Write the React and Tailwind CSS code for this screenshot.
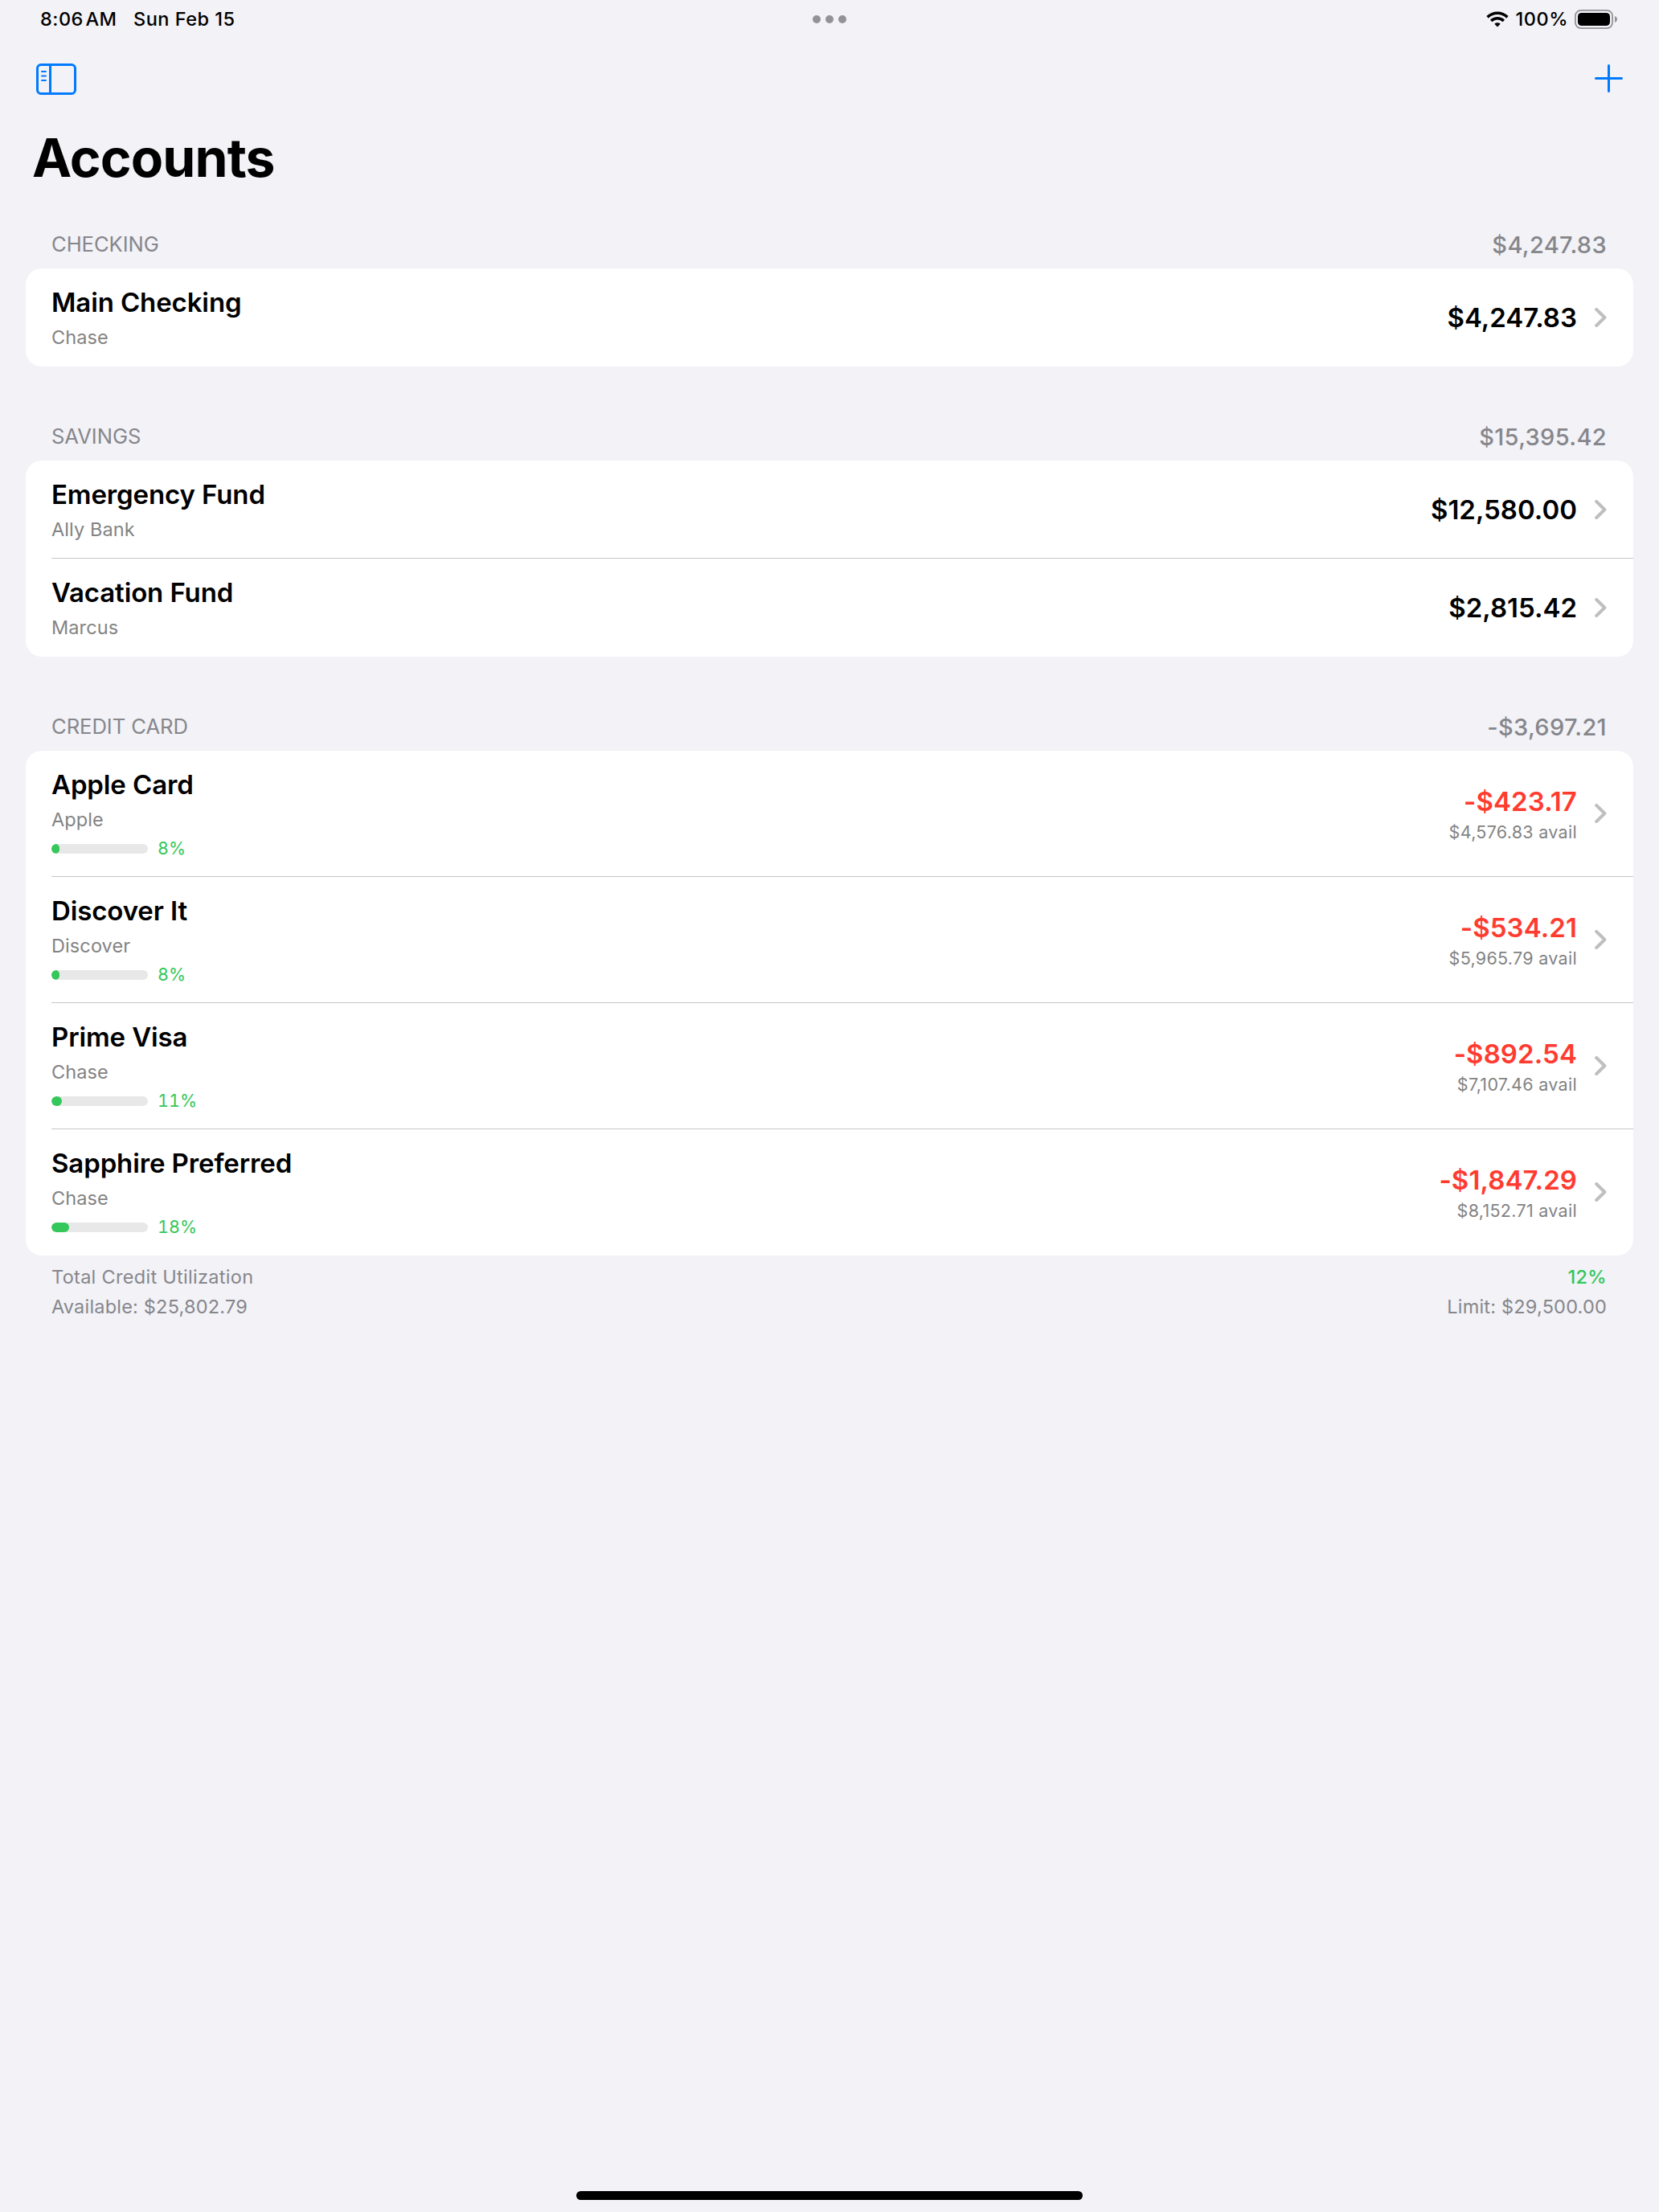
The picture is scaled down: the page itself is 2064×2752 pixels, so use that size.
import React from "react";

const sections = [
  {
    title: "CHECKING",
    total: "$4,247.83",
    accounts: [{ name: "Main Checking", bank: "Chase", balance: "$4,247.83" }],
  },
  {
    title: "SAVINGS",
    total: "$15,395.42",
    accounts: [
      { name: "Emergency Fund", bank: "Ally Bank", balance: "$12,580.00" },
      { name: "Vacation Fund", bank: "Marcus", balance: "$2,815.42" },
    ],
  },
  {
    title: "CREDIT CARD",
    total: "-$3,697.21",
    accounts: [
      { name: "Apple Card", bank: "Apple", balance: "-$423.17", avail: "$4,576.83 avail", used: 8.46 },
      { name: "Discover It", bank: "Discover", balance: "-$534.21", avail: "$5,965.79 avail", used: 8.22 },
      { name: "Prime Visa", bank: "Chase", balance: "-$892.54", avail: "$7,107.46 avail", used: 11.16 },
      { name: "Sapphire Preferred", bank: "Chase", balance: "-$1,847.29", avail: "$8,152.71 avail", used: 18.47 },
    ],
  },
];

// ── Icons ──────────────────────────────────────────────────
function SidebarIcon() {
  return (
    <svg width="50" height="39" viewBox="0 0 50 39" fill="none" stroke="#007aff" strokeLinecap="round">
      <rect x="1.5" y="1.5" width="47" height="36" rx="4.6" strokeWidth="3" />
      <path d="M17.5 1.5v36" strokeWidth="3" strokeLinecap="butt" />
      <path d="M7 10h5M7 15.5h5M7 21h5" strokeWidth="2" />
    </svg>
  );
}

function PlusIcon() {
  return (
    <svg className="mb-0.5" width="35" height="35" viewBox="0 0 35 35" fill="none" stroke="#007aff" strokeWidth="3" strokeLinecap="round">
      <path d="M17.5 1.5v32M1.5 17.5h32" />
    </svg>
  );
}

function WifiIcon() {
  return (
    <svg width="28" height="20" viewBox="0 0 28 20" fill="none" stroke="#000">
      <path d="M1.6 7.4a17.6 17.6 0 0 1 24.8 0" strokeWidth="3.6" />
      <path d="M6.2 12a11 11 0 0 1 15.6 0" strokeWidth="3.5" />
      <path d="M14 19.6l-3.7-3.8a5.4 5.4 0 0 1 7.4 0z" fill="#000" stroke="none" />
    </svg>
  );
}

function BatteryIcon() {
  return (
    <svg width="55" height="24" viewBox="0 0 55 24" fill="none">
      <rect x="0.9" y="0.9" width="46.2" height="22.2" rx="7" stroke="#929297" strokeWidth="1.8" />
      <rect x="4" y="4" width="40" height="16" rx="4.6" fill="#000" />
      <path d="M50 8c1.900.8 3 2.200 3 4s-1.100 3.200-3 4z" fill="#929297" />
    </svg>
  );
}

function Chevron({ className = "" }) {
  return (
    <svg className={`ml-[22px] shrink-0 ${className}`} width="15" height="24" viewBox="0 0 15 24" fill="none" stroke="#bfbfbf" strokeWidth="4" strokeLinecap="round" strokeLinejoin="round">
      <path d="M2.200 2L12.400 12L2.200 22" />
    </svg>
  );
}

// ── Header bars ────────────────────────────────────────────
function StatusBar() {
  return (
    <div className="grid h-[48px] grid-cols-3 items-center px-[50px] text-[23.5px] leading-8 font-medium tracking-[0.5px] text-black">
      <div className="flex gap-[20.5px]">
        <span>8:06&#8202;AM</span>
        <span>Sun Feb 15</span>
      </div>
      <div className="flex justify-center gap-1.5">
        <span className="size-2.5 rounded-full bg-[#929297]" />
        <span className="size-2.5 rounded-full bg-[#929297]" />
        <span className="size-2.5 rounded-full bg-[#929297]" />
      </div>
      <div className="flex items-center justify-end">
        <WifiIcon />
        <span className="mr-2 ml-[9px]">100%</span>
        <BatteryIcon />
      </div>
    </div>
  );
}

function NavBar() {
  return (
    <div className="flex h-[101px] items-center justify-between px-[45px]">
      <SidebarIcon />
      <PlusIcon />
    </div>
  );
}

// ── Account row ────────────────────────────────────────────
function Utilization({ used }) {
  return (
    <div className="mt-1.5 flex h-7 items-center">
      <div className="h-3 w-[120px] overflow-hidden rounded-full bg-[#e8e8e8]">
        <div className="h-3 rounded-full bg-[#34c759]" style={{ width: `${used}%` }} />
      </div>
      <span className="ml-3 pb-0.5 text-[21.5px] leading-7 tracking-[0.1px] text-[#34c759] tabular-nums">{Math.round(used)}%</span>
    </div>
  );
}

function AccountRow({ account, last }) {
  const { name, bank, balance, avail, used } = account;
  return (
    <div className={`relative flex justify-between pr-[33px] pl-8 ${avail ? "h-[157px]" : "h-[122px]"}`}>
      <div className="pt-[22px]">
        <div className="text-[33px] leading-10 font-semibold tracking-[-0.12px] text-black">{name}</div>
        <div className="mt-2 text-[23.5px] leading-8 tracking-[0.1px] text-[#838383]">{bank}</div>
        {used && <Utilization used={used} />}
      </div>
      <div className="flex items-center">
        <div className="text-right">
          <div className={`text-[33px] leading-10 font-semibold ${avail ? "tracking-[0.1px] text-[#ff3b30]" : "text-black"}`}>{balance}</div>
          {avail && <div className="mt-1 text-[21.5px] leading-7 tracking-[0.3px] text-[#838383]">{avail}</div>}
        </div>
        <Chevron className={avail ? "mb-px" : ""} />
      </div>
      {!last && <div className="absolute right-0 bottom-0 left-8 h-px bg-[#c6c6c8]" />}
    </div>
  );
}

function Section({ section }) {
  return (
    <section className="mb-[57px] last:mb-0">
      <div className="flex h-[60px] items-center justify-between pr-[33px] pl-8 text-[#86868b]">
        <span className="text-[25.6px] tracking-[-0.05px]">{section.title}</span>
        <span className="pt-0.5 text-[29px] font-medium tracking-[0.35px]">{section.total}</span>
      </div>
      <div className="rounded-[20px] bg-white">
        {section.accounts.map((account, i) => (
          <AccountRow key={account.name} account={account} last={i === section.accounts.length - 1} />
        ))}
      </div>
    </section>
  );
}

function Footer() {
  return (
    <div className="mt-[11px] flex flex-col gap-[5px] pr-[65px] pl-16 text-[23.5px] leading-8 text-[#86868b]">
      <div className="flex justify-between tracking-[0.3px]">
        <span>Total Credit Utilization</span>
        <span className="font-medium text-[#34c759]">12%</span>
      </div>
      <div className="flex justify-between tracking-[0.2px]">
        <span>Available: $25,802.79</span>
        <span>Limit: $29,500.00</span>
      </div>
    </div>
  );
}

export default function App() {
  return (
    <div className="flex h-[2752px] w-[2064px] flex-col bg-[#f2f2f7] font-['Inter',sans-serif]">
      <StatusBar />
      <NavBar />
      <h1 className="mt-[7px] pl-10 text-[66px] leading-[80px] font-bold tracking-[-0.9px] text-black">Accounts</h1>
      <main className="mt-[38px] px-8">
        {sections.map((section) => (
          <Section key={section.title} section={section} />
        ))}
      </main>
      <Footer />
      <div className="mt-auto mb-[15px] h-[11px] w-[630px] self-center rounded-full bg-black" />
    </div>
  );
}
